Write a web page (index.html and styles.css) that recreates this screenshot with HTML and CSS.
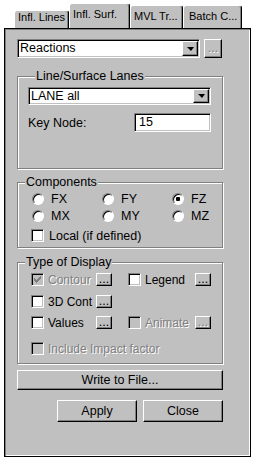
FILE: index.html
```html
<html>

<head>
    <title>Influence Surface</title>
    <link rel="stylesheet" href="styles.css">
</head>

<body>
    <div class="dialog">
        <div class="tabs">
            <div class="tab tab-lines">Infl. Lines</div>
            <div class="tab tab-active">Infl. Surf.</div>
            <div class="tab tab-mvl">MVL Tr...</div>
            <div class="tab tab-batch">Batch C...</div>
        </div>

        <div class="panel">
            <div class="row-top">
                <div class="sunken combo combo-main">
                    <span class="combo-text">Reactions</span>
                    <span class="raised drop"><i class="arrow"></i></span>
                </div>
                <div class="raised btn-more off">...</div>
            </div>

            <div class="group g-lanes">
                <span class="group-title">Line/Surface Lanes</span>
                <div class="sunken combo combo-lane">
                    <span class="combo-text">LANE all</span>
                    <span class="raised drop"><i class="arrow"></i></span>
                </div>
                <div class="keynode">
                    <span class="keynode-label">Key Node:</span>
                    <div class="sunken field">15</div>
                </div>
            </div>

            <div class="group g-comp">
                <span class="group-title">Components</span>
                <div class="radios">
                    <div class="radio-item"><span class="radio"></span>FX</div>
                    <div class="radio-item"><span class="radio"></span>FY</div>
                    <div class="radio-item"><span class="radio on"></span>FZ</div>
                    <div class="radio-item"><span class="radio"></span>MX</div>
                    <div class="radio-item"><span class="radio"></span>MY</div>
                    <div class="radio-item"><span class="radio"></span>MZ</div>
                </div>
                <div class="check-item local">
                    <span class="sunken check"></span>
                    <span class="check-label">Local (if defined)</span>
                </div>
            </div>

            <div class="group g-disp">
                <span class="group-title">Type of Display</span>
                <div class="disp-row r1">
                    <div class="check-item">
                        <span class="sunken check off">
                            <svg width="7" height="7" viewBox="0 0 7 7"><path d="M0 2h1v1h1v1h1v-1h1v-1h1v-1h1v-1h1v3h-1v1h-1v1h-1v1h-1v1h-1v-1h-1v-1h-1z" fill="#808080"/></svg>
                        </span>
                        <span class="check-label off">Contour</span>
                        <span class="raised btn-dots">...</span>
                    </div>
                    <div class="check-item">
                        <span class="sunken check"></span>
                        <span class="check-label">Legend</span>
                        <span class="raised btn-dots">...</span>
                    </div>
                </div>
                <div class="disp-row r2">
                    <div class="check-item">
                        <span class="sunken check"></span>
                        <span class="check-label">3D Cont</span>
                        <span class="raised btn-dots">...</span>
                    </div>
                </div>
                <div class="disp-row r3">
                    <div class="check-item">
                        <span class="sunken check"></span>
                        <span class="check-label">Values</span>
                        <span class="raised btn-dots">...</span>
                    </div>
                    <div class="check-item">
                        <span class="sunken check off"></span>
                        <span class="check-label off">Animate</span>
                        <span class="raised btn-dots off">...</span>
                    </div>
                </div>
                <div class="disp-row r4">
                    <div class="check-item wide">
                        <span class="sunken check off"></span>
                        <span class="check-label off">Include Impact factor</span>
                    </div>
                </div>
            </div>

            <div class="raised button btn-write">Write to File...</div>

            <div class="actions">
                <div class="raised button btn-act">Apply</div>
                <div class="raised button btn-act">Close</div>
            </div>
        </div>
    </div>
</body>

</html>
```

FILE: styles.css
```css
body {
    margin: 0;
    background: #fff;
    font-family: "Liberation Sans", Arial, sans-serif;
    font-size: 12.5px;
    color: #000;
}

.dialog {
    width: 254px;
    height: 459px;
}

/* tabs */

.tabs {
    display: flex;
    align-items: flex-end;
    height: 28px;
    padding-left: 14px;
    box-sizing: border-box;
}

.tab {
    box-sizing: border-box;
    background: #c0c0c0;
    border: 1px solid #fff;
    border-bottom: 0;
    border-right-color: #000;
    box-shadow: inset -1px 0 #808080;
    border-radius: 3px 3px 0 0;
    font-size: 11px;
    line-height: 13px;
    padding-left: 3px;
    white-space: nowrap;
}

.tab-lines {
    width: 55px;
    height: 18px;
}

.tab-active {
    width: 61px;
    height: 25px;
    padding-top: 4px;
}

.tab-mvl {
    width: 53px;
    height: 23px;
    padding-top: 4px;
}

.tab-batch {
    width: 59px;
    height: 23px;
    padding-top: 4px;
    padding-left: 5px;
}

/* panel */

.panel {
    box-sizing: border-box;
    width: 247px;
    height: 429px;
    margin-left: 4px;
    border: 1px solid #000;
    box-shadow: inset 1px 1px #808080, inset -1px -1px #fff;
    background: #c0c0c0;
    padding: 10px 0 0 12px;
    display: flex;
    flex-direction: column;
    align-items: flex-start;
}

.sunken {
    box-sizing: border-box;
    background: #fff;
    border: 1px solid;
    border-color: #808080 #fff #fff #808080;
    box-shadow: inset 1px 1px #000, inset -1px -1px #c0c0c0;
}

.raised {
    box-sizing: border-box;
    background: #c0c0c0;
    border: 1px solid;
    border-color: #fff #000 #000 #fff;
    box-shadow: inset -1px -1px #808080;
}

.off {
    color: #808080;
    text-shadow: 1px 1px #fff;
}

.row-top {
    display: flex;
    gap: 4px;
}

.combo {
    display: flex;
    align-items: center;
    padding: 1px;
}

.combo-main {
    width: 183px;
    height: 19px;
}

.combo-text {
    flex: 1;
    padding-left: 1px;
    line-height: 15px;
}

.drop {
    width: 16px;
    align-self: stretch;
    display: flex;
    align-items: center;
    justify-content: center;
}

.arrow {
    width: 0;
    height: 0;
    border-top: 4px solid #000;
    border-left: 4px solid transparent;
    border-right: 3px solid transparent;
}

.btn-more {
    width: 18px;
    height: 19px;
    display: flex;
    align-items: center;
    justify-content: center;
    line-height: 15px;
}

/* groups */

.group {
    box-sizing: border-box;
    width: 206px;
    border: 1px solid #808080;
    box-shadow: 1px 1px #fff, inset 1px 1px #fff;
    display: flex;
    flex-direction: column;
    align-items: flex-start;
}

.group-title {
    margin: -8px 0 0 7px;
    padding: 0 1px;
    background: #c0c0c0;
    line-height: 15px;
}

.g-lanes {
    height: 93px;
    margin-top: 18px;
    padding-left: 10px;
}

.combo-lane {
    width: 183px;
    height: 18px;
    margin-top: 3px;
}

.keynode {
    display: flex;
    align-items: center;
    width: 183px;
    margin-top: 8px;
}

.keynode-label {
    flex: 1;
}

.field {
    width: 77px;
    height: 19px;
    padding-left: 4px;
    line-height: 17px;
}

.g-comp {
    height: 66px;
    margin-top: 13px;
}

.radios {
    display: grid;
    grid-template-columns: 70px 70px 40px;
    row-gap: 2px;
    margin: 1px 0 0 14px;
}

.radio-item {
    display: flex;
    align-items: center;
    gap: 7px;
    height: 15px;
}

.radio {
    box-sizing: border-box;
    width: 12px;
    height: 12px;
    border-radius: 50%;
    background: #fff;
    border: 1px solid;
    border-color: #808080 #fff #fff #808080;
    box-shadow: inset 1px 1px #000;
    display: flex;
    align-items: center;
    justify-content: center;
}

.radio.on::after {
    content: "";
    width: 4px;
    height: 4px;
    border-radius: 1px;
    background: #000;
}

.check-item {
    display: flex;
    align-items: center;
    height: 15px;
}

.check {
    width: 13px;
    height: 13px;
    display: flex;
    align-items: center;
    justify-content: center;
}

.check.off {
    background: #c0c0c0;
}

.check-label {
    flex: 1;
    margin-left: 4px;
    white-space: nowrap;
}

.local {
    margin: 5px 0 0 13px;
}

.local .check-label {
    margin-left: 5px;
}

.g-disp {
    height: 102px;
    margin-top: 14px;
}

.disp-row {
    display: grid;
    grid-template-columns: 81px 83px;
    column-gap: 16px;
    margin-left: 13px;
    font-size: 12px;
}

.r1 {
    margin-top: 2px;
}

.r2 {
    margin-top: 7px;
}

.r3 {
    margin-top: 6px;
}

.r4 {
    margin-top: 11px;
}

.wide {
    grid-column: span 2;
}

.btn-dots {
    width: 16px;
    height: 13px;
    display: flex;
    align-items: flex-end;
    justify-content: center;
    line-height: 11px;
    font-size: 12.5px;
}

/* buttons */

.button {
    text-align: center;
}

.btn-write {
    width: 206px;
    height: 20px;
    line-height: 18px;
    margin-top: 6px;
}

.actions {
    display: flex;
    justify-content: flex-end;
    gap: 6px;
    width: 206px;
    margin-top: 10px;
}

.btn-act {
    width: 80px;
    height: 22px;
    line-height: 20px;
}
```
